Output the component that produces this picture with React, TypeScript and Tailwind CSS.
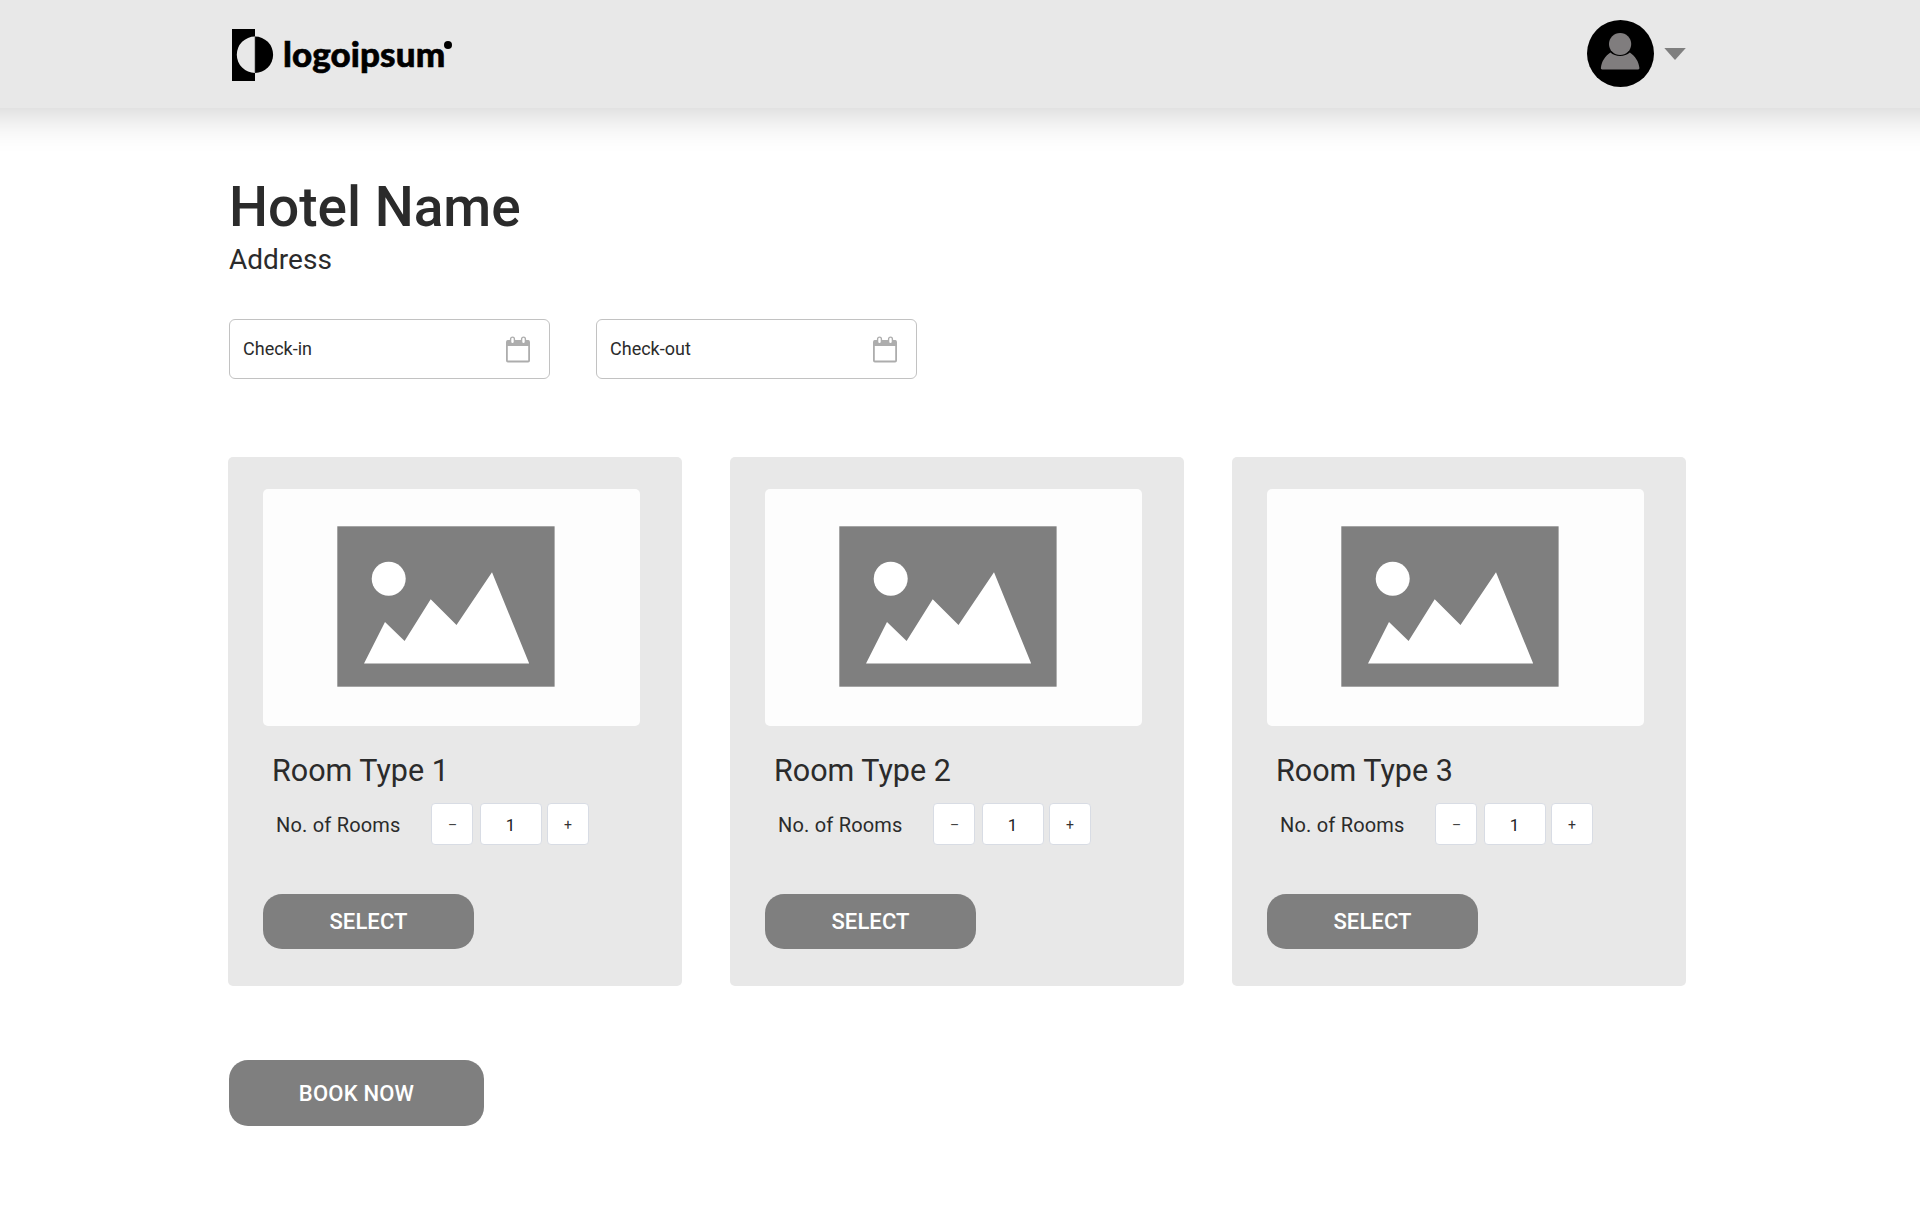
import React, { useState } from "react";

function Logo() {
  return (
    <div className="flex h-[52px] items-start">
      <svg width="42" height="52" viewBox="0 0 42 52" aria-hidden="true">
        <path d="M0 0H23V7.5A18.1 18.1 0 0 0 23 43.9V52H0Z" fill="#000" />
        <path d="M23 7.5A18 18.1 0 0 1 23 43.9Z" fill="#000" />
        <path d="M22.8 7.5V43.9" stroke="#777" strokeWidth="0.6" />
      </svg>
      <span className="mt-[2px] ml-[9px] font-['Lato',sans-serif] text-[35px] leading-[44px] font-black tracking-[0.1px] text-black [-webkit-text-stroke:0.6px_#000]">
        logoipsum
      </span>
      <span className="mt-[12px] -ml-px size-2 rounded-full bg-black" />
    </div>
  );
}

function AccountMenu() {
  return (
    <button className="flex items-center" aria-label="Account">
      <svg width="67" height="67" viewBox="0 0 67 67" aria-hidden="true">
        <circle cx="33.5" cy="33.5" r="33.5" fill="#000" />
        <path
          d="M23.4 32.6C18 36.2 14.6 41.6 13.9 47.8C13.8 48.8 14.3 49.4 15.2 49.4H51.1C52 49.4 52.5 48.8 52.4 47.8C51.7 41.6 48.2 36.2 42.8 32.6C38 37.2 28.2 37.2 23.4 32.6Z"
          fill="#807d7e"
        />
        <circle cx="33.1" cy="24" r="11.1" fill="#807d7e" />
      </svg>
      <svg className="mt-[1px] ml-[10px]" width="22" height="12" viewBox="0 0 22 12" aria-hidden="true">
        <path d="M0.3 0H21.8L11 12Z" fill="#7f7f7f" />
      </svg>
    </button>
  );
}

function CalendarIcon() {
  return (
    <svg width="24" height="27" viewBox="0 0 24 27" fill="none" aria-hidden="true">
      <rect x="0.9" y="4.9" width="22.2" height="20.6" rx="1" stroke="#adadad" strokeWidth="1.8" />
      <path d="M1 4.5H23V10H1Z" fill="#adadad" />
      <rect x="4.6" y="1.1" width="3.8" height="6.6" rx="1.9" fill="#fff" stroke="#adadad" strokeWidth="1.4" />
      <rect x="15.6" y="1.1" width="3.8" height="6.6" rx="1.9" fill="#fff" stroke="#adadad" strokeWidth="1.4" />
    </svg>
  );
}

function DateField({ label }: { label: string }) {
  return (
    <button className="flex h-[60px] w-[321px] items-center justify-between rounded-md border border-[#c2c2c2] bg-white pr-[19px] pl-[13px]">
      <span className="-mt-0.5 text-[18px]">{label}</span>
      <CalendarIcon />
    </button>
  );
}

function PicturePlaceholder() {
  return (
    <div className="h-[237px] w-[377px] rounded-[5px] bg-[#fdfdfd]">
      <svg width="377" height="237" viewBox="0 0 377 237" aria-hidden="true">
        <rect x="74.3" y="37.3" width="217.3" height="160.4" fill="#7f7f7f" />
        <circle cx="125.7" cy="89.7" r="17" fill="#fff" />
        <path d="M101 174.6L122 133L141.6 152L167.7 110.2L193.5 135.9L229 83.3L266.2 174.6Z" fill="#fff" />
      </svg>
    </div>
  );
}

const box = "flex h-[42px] items-center justify-center rounded border border-[#d8dce4] bg-white leading-none";

function RoomCard({ title }: { title: string }) {
  const [count, setCount] = useState(1);
  return (
    <section className="h-[529px] w-[454px] rounded-[5px] bg-[#e8e8e8] pt-8 pl-[35px]">
      <PicturePlaceholder />
      <h2 className="mt-[27px] ml-[9px] text-[30.5px] leading-9">{title}</h2>
      <div className="mt-[14px] ml-[13px] flex h-[42px] items-center">
        <span className="w-[155px] pt-0.5 text-[20px] tracking-[0.2px]">No. of Rooms</span>
        <button className={`${box} w-[42px] pt-0.5 pl-px text-[14px] text-[#444]`} onClick={() => setCount(Math.max(1, count - 1))}>–</button>
        <span className={`${box} ml-[7px] w-[62px] pt-0.5 pr-px text-[17px] text-[#222]`}>{count}</span>
        <button className={`${box} ml-[5px] w-[42px] pt-0.5 text-[14px] text-[#333]`} onClick={() => setCount(count + 1)}>+</button>
      </div>
      <button className="mt-[49px] h-[55px] w-[211px] rounded-[19px] bg-[#7f7f7f] text-[22px] font-medium tracking-[0.1px] text-white">
        SELECT
      </button>
    </section>
  );
}

export default function App() {
  return (
    <div className="min-h-[1214px] overflow-hidden bg-white font-['Roboto',sans-serif] text-[#2b2b2b]">
      <header className="-mx-16 flex h-[108px] items-start justify-between bg-[#e8e8e8] pr-[298px] pl-[296px] shadow-[0_4px_40px_rgba(0,0,0,0.2)]">
        <div className="pt-[29px]"><Logo /></div>
        <div className="pt-5"><AccountMenu /></div>
      </header>
      <main className="pl-[228px]">
        <h1 className="mt-[66px] ml-px text-[55px] leading-[66px] font-medium">Hotel Name</h1>
        <p className="mt-1 ml-px text-[28px] leading-8">Address</p>
        <div className="mt-[43px] ml-px flex gap-[46px]">
          <DateField label="Check-in" />
          <DateField label="Check-out" />
        </div>
        <div className="mt-[78px] flex gap-12">
          <RoomCard title="Room Type 1" />
          <RoomCard title="Room Type 2" />
          <RoomCard title="Room Type 3" />
        </div>
        <button className="mt-[74px] ml-px h-[66px] w-[255px] rounded-[19px] bg-[#7f7f7f] text-[22px] font-medium tracking-[0.2px] text-white">
          BOOK NOW
        </button>
      </main>
    </div>
  );
}
